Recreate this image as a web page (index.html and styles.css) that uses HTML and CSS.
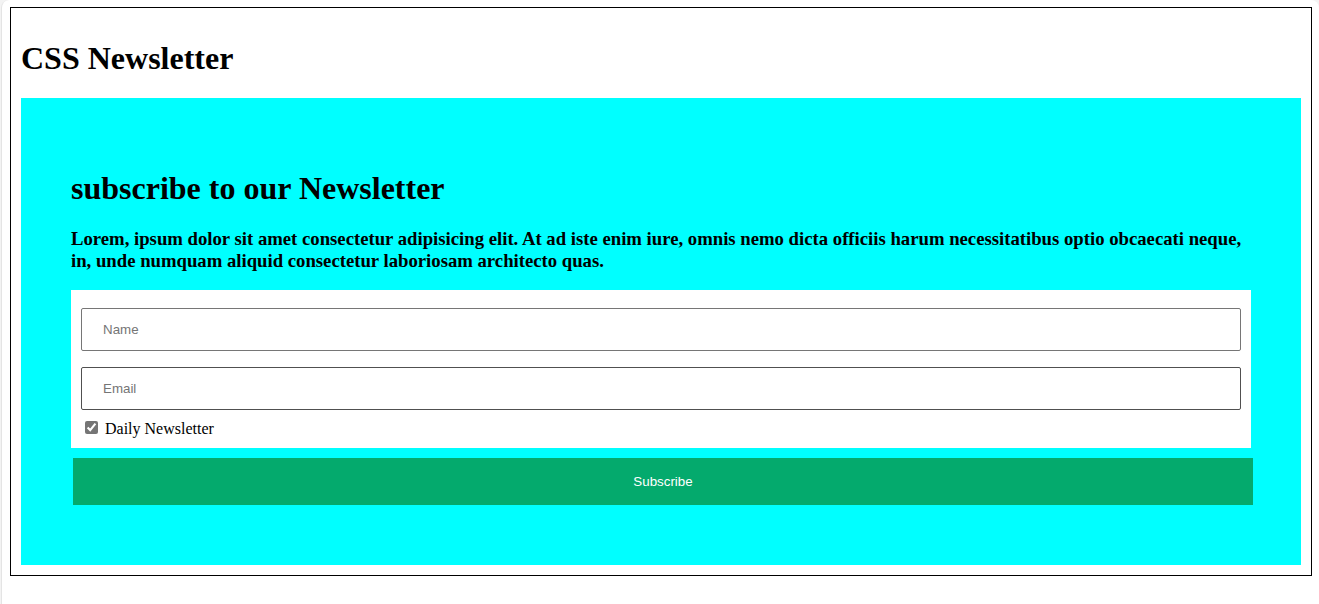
FILE: index.html
```html
<!DOCTYPE html>
<html lang="en">
<head>
<meta charset="utf-8">
<title>CSS Newsletter</title>
<link rel="stylesheet" href="styles.css">
</head>
<body>
<main class="page">
  <h1 class="page-title">CSS Newsletter</h1>
  <form class="newsletter">
    <h1 class="newsletter-title">subscribe to our Newsletter</h1>
    <h3 class="newsletter-text">Lorem, ipsum dolor sit amet consectetur adipisicing elit. At ad iste enim iure, omnis nemo dicta officiis harum necessitatibus optio obcaecati neque, in, unde numquam aliquid consectetur laboriosam architecto quas.</h3>
    <div class="fields">
      <input class="field" type="text" placeholder="Name" aria-label="Name">
      <input class="field field-email" type="text" placeholder="Email" aria-label="Email">
      <label class="daily"><input class="daily-check" type="checkbox" checked> Daily Newsletter</label>
    </div>
    <button class="subscribe" type="button">Subscribe</button>
  </form>
</main>
</body>
</html>
```

FILE: styles.css
```css
* {
  box-sizing: border-box;
}

html {
  padding-left: 1px;
  background: #f3f3f3;
}

body {
  min-height: 100vh;
  margin: 0;
  padding: 7px 7px 28px 8px;
  border-left: 1px solid #e4e4e4;
  border-radius: 8px 8px 0 0;
  background: #fff;
  color: #000;
  font-family: "Liberation Serif", "Times New Roman", serif;
  font-size: 16px;
}

.page {
  padding: 10px;
  border: 1px solid #000;
}

.page-title,
.newsletter-title {
  margin: 22px 0;
  font-size: 32px;
  line-height: 36px;
}

.newsletter {
  padding: 50px;
  background: #0ff;
}

.newsletter-text {
  margin: 0 0 18px;
  line-height: 22px;
}

.fields {
  padding: 10px;
  background: #fff;
}

.field {
  display: block;
  width: 100%;
  height: 43px;
  margin: 8px 0 16px;
  padding: 12px 21px;
  border: 1px solid #767676;
  border-radius: 2px;
  font-family: "Liberation Sans", Arial, sans-serif;
}

.field::placeholder {
  color: #757575;
}

.field-email {
  margin-bottom: 8px;
  border-color: #505050;
}

.daily {
  display: flex;
  align-items: flex-start;
  gap: 7px;
  padding-left: 4px;
  line-height: 22px;
  height: 20px;
}

.daily-check {
  width: 13px;
  height: 13px;
  margin: 3px 0 0;
  accent-color: #757575;
}

.subscribe {
  display: block;
  width: 100%;
  height: 47px;
  margin: 10px 2px;
  border: 0;
  background: #04aa6d;
  color: #fff;
  font-family: "Liberation Sans", Arial, sans-serif;
}
```
